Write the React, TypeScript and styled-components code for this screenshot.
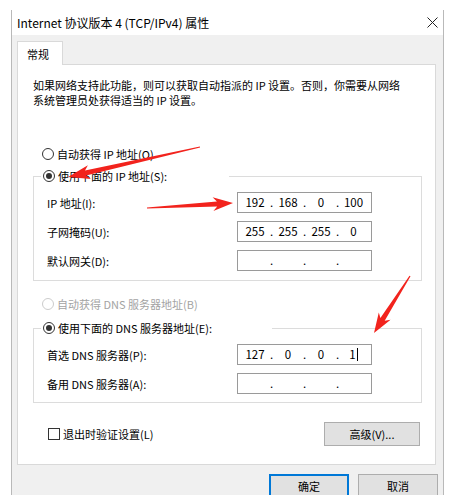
import React from 'react';
import styled, { createGlobalStyle } from 'styled-components';

const Global = createGlobalStyle`
  html, body { margin: 0; padding: 0; background: #fff; }
  body {
    font-family: "Noto Sans CJK SC", "Microsoft YaHei", sans-serif;
    font-size: 11px;
    color: #000;
  }
`;

const Page = styled.div`
  position: relative;
  width: 453px;
  height: 495px;
  overflow: hidden;
  background: #fff;
  padding: 10px 9px 0 11px;
  box-sizing: border-box;
`;

const Window = styled.div`
  height: 485px;
  border-left: 1px solid #b9b9b9;
  border-right: 1px solid #b9b9b9;
  display: flex;
  flex-direction: column;
  box-sizing: border-box;
`;

const TitleBar = styled.div`
  height: 25px;
  flex: none;
  background: #fff;
  display: flex;
  align-items: center;
  justify-content: space-between;
  padding: 0 5px 0 5px;
  font-size: 12px;
  line-height: 14px;
`;

const Body = styled.div`
  flex: 1;
  background: #f0f0f0;
  padding: 6px 7px 0 5px;
  display: flex;
  flex-direction: column;
`;

const Tab = styled.div`
  position: relative;
  z-index: 1;
  width: 46px;
  height: 24px;
  box-sizing: border-box;
  background: #fff;
  border: 1px solid #d9d9d9;
  border-bottom: none;
  margin-bottom: -1px;
  padding-left: 9px;
  display: flex;
  align-items: center;
`;

const Panel = styled.div`
  height: 401px;
  box-sizing: border-box;
  background: #fff;
  border: 1px solid #d9d9d9;
  padding: 13px 13px 0 15px;
  display: flex;
  flex-direction: column;
`;

const Desc = styled.p`
  margin: 0;
  line-height: 15px;
  white-space: nowrap;
`;

const RadioRow = styled.div<{ $mt: number; $disabled?: boolean }>`
  display: flex;
  align-items: center;
  height: 14px;
  margin-top: ${p => p.$mt}px;
  padding-left: 9px;
  color: ${p => (p.$disabled ? '#a3a3a3' : '#000')};
`;

const RadioCircle = styled.span<{ $checked?: boolean; $disabled?: boolean }>`
  width: 12px;
  height: 12px;
  box-sizing: border-box;
  border-radius: 50%;
  border: 1px solid ${p => (p.$disabled ? '#cccccc' : '#333')};
  background: #fff;
  display: flex;
  align-items: center;
  justify-content: center;
  margin-right: 3px;
  flex: none;
  &::after {
    content: '';
    display: ${p => (p.$checked ? 'block' : 'none')};
    width: 6px;
    height: 6px;
    border-radius: 50%;
    background: #333;
  }
`;

const Group = styled.fieldset<{ $mt: number; $pt: number; $pb: number }>`
  margin: ${p => p.$mt}px 0 0 0;
  border: 1px solid #dcdcdc;
  padding: ${p => p.$pt}px 0 ${p => p.$pb}px 7px;
  min-width: 0;
  display: flex;
  flex-direction: column;
  gap: 8px;
`;

const Legend = styled.legend<{ $w: number }>`
  padding: 0;
  width: ${p => p.$w}px;
  height: 14px;
  display: flex;
  align-items: center;
  background: #fff;
  line-height: 14px;
`;

const LegendRadio = styled(RadioCircle)`
  margin-left: 2px;
`;

const FieldRow = styled.div`
  display: grid;
  grid-template-columns: 190px 135px;
  align-items: center;
  margin-left: 6px;
  height: 21px;
`;

const IpBox = styled.div`
  width: 135px;
  height: 21px;
  box-sizing: border-box;
  border: 1px solid #9a9a9a;
  background: #fff;
  display: grid;
  grid-template-columns: 24px 9px 24px 9px 24px 9px 23px;
  align-items: center;
  padding-left: 5px;
  font-size: 11.5px;
  line-height: 19px;
`;

const Seg = styled.span`
  text-align: center;
  position: relative;
`;

const Caret = styled.span`
  display: inline-block;
  width: 1px;
  height: 13px;
  background: #000;
  vertical-align: middle;
  margin-left: 1px;
  margin-top: -2px;
`;

const Footer = styled.div`
  display: flex;
  align-items: center;
  justify-content: space-between;
  margin-top: 19px;
  padding-left: 15px;
  padding-right: 2px;
`;

const CheckLabel = styled.label`
  display: flex;
  align-items: center;
`;

const CheckBox = styled.span`
  width: 12px;
  height: 12px;
  box-sizing: border-box;
  border: 1px solid #333;
  background: #fff;
  margin-right: 3px;
`;

const Button = styled.button<{ $w: number; $primary?: boolean }>`
  width: ${p => p.$w}px;
  height: 24px;
  box-sizing: border-box;
  background: #e1e1e1;
  border: 1px solid ${p => (p.$primary ? '#0078d7' : '#adadad')};
  box-shadow: ${p => (p.$primary ? 'inset 0 0 0 1px #0078d7' : 'none')};
  font-family: inherit;
  font-size: 11px;
  color: #000;
  padding: 0;
  border-radius: 0;
`;

const ButtonBar = styled.div`
  display: flex;
  justify-content: flex-end;
  gap: 9px;
  margin-top: 9px;
  margin-right: -2px;
`;

const Overlay = styled.svg`
  position: absolute;
  left: 0;
  top: 0;
  pointer-events: none;
`;

function arrow(
  x1: number, y1: number, x2: number, y2: number,
  headLen: number, headHalf: number, shaftHalf: number, tailHalf: number
) {
  const dx = x2 - x1;
  const dy = y2 - y1;
  const len = Math.hypot(dx, dy);
  const ux = dx / len;
  const uy = dy / len;
  const nx = -uy;
  const ny = ux;
  const bx = x2 - ux * headLen;
  const by = y2 - uy * headLen;
  const jx = bx + ux * 4;
  const jy = by + uy * 4;
  const pts = [
    [x1 + nx * tailHalf, y1 + ny * tailHalf],
    [jx + nx * shaftHalf, jy + ny * shaftHalf],
    [bx + nx * headHalf, by + ny * headHalf],
    [x2, y2],
    [bx - nx * headHalf, by - ny * headHalf],
    [jx - nx * shaftHalf, jy - ny * shaftHalf],
    [x1 - nx * tailHalf, y1 - ny * tailHalf],
  ];
  return pts.map(p => `${p[0].toFixed(1)},${p[1].toFixed(1)}`).join(' ');
}

const Ip: React.FC<{ parts: string[]; caret?: boolean }> = ({ parts, caret }) => (
  <IpBox>
    <Seg>{parts[0]}</Seg>
    <Seg>.</Seg>
    <Seg>{parts[1]}</Seg>
    <Seg>.</Seg>
    <Seg>{parts[2]}</Seg>
    <Seg>.</Seg>
    <Seg>
      {parts[3]}
      {caret && <Caret />}
    </Seg>
  </IpBox>
);

export default function App() {
  return (
    <>
      <Global />
      <Page>
        <Window>
          <TitleBar>
            <span>Internet 协议版本 4 (TCP/IPv4) 属性</span>
            <svg width="11" height="11" viewBox="0 0 11 11">
              <path d="M0.5 0.5 L10.5 10.5 M10.5 0.5 L0.5 10.5" stroke="#222" strokeWidth="1" fill="none" />
            </svg>
          </TitleBar>
          <Body>
            <Tab>常规</Tab>
            <Panel>
              <Desc>
                如果网络支持此功能，则可以获取自动指派的 IP 设置。否则，你需要从网络
                <br />
                系统管理员处获得适当的 IP 设置。
              </Desc>
              <RadioRow $mt={39}>
                <RadioCircle />
                自动获得 IP 地址(O)
              </RadioRow>
              <Group $mt={8} $pt={9} $pb={9}>
                <Legend $w={188}>
                  <LegendRadio $checked />
                  使用下面的 IP 地址(S):
                </Legend>
                <FieldRow>
                  <span>IP 地址(I):</span>
                  <Ip parts={['192', '168', '0', '100']} />
                </FieldRow>
                <FieldRow>
                  <span>子网掩码(U):</span>
                  <Ip parts={['255', '255', '255', '0']} />
                </FieldRow>
                <FieldRow>
                  <span>默认网关(D):</span>
                  <Ip parts={['', '', '', '']} />
                </FieldRow>
              </Group>
              <RadioRow $mt={16} $disabled>
                <RadioCircle $disabled />
                自动获得 DNS 服务器地址(B)
              </RadioRow>
              <Group $mt={10} $pt={9} $pb={8}>
                <Legend $w={231}>
                  <LegendRadio $checked />
                  使用下面的 DNS 服务器地址(E):
                </Legend>
                <FieldRow>
                  <span>首选 DNS 服务器(P):</span>
                  <Ip parts={['127', '0', '0', '1']} caret />
                </FieldRow>
                <FieldRow>
                  <span>备用 DNS 服务器(A):</span>
                  <Ip parts={['', '', '', '']} />
                </FieldRow>
              </Group>
              <Footer>
                <CheckLabel>
                  <CheckBox />
                  退出时验证设置(L)
                </CheckLabel>
                <Button $w={96}>高级(V)...</Button>
              </Footer>
            </Panel>
            <ButtonBar>
              <Button $w={80} $primary>确定</Button>
              <Button $w={80}>取消</Button>
            </ButtonBar>
          </Body>
        </Window>
        <Overlay width="453" height="495" viewBox="0 0 453 495">
          <polygon points={arrow(200, 147, 68, 177, 22, 7, 2.5, 0.6)} fill="#f2231d" />
          <polygon points={arrow(147, 208, 233, 203, 20, 7, 2.5, 0.6)} fill="#f2231d" />
          <polygon points={arrow(410, 276, 374, 333, 20, 7, 2.5, 0.6)} fill="#f2231d" />
        </Overlay>
      </Page>
    </>
  );
}
